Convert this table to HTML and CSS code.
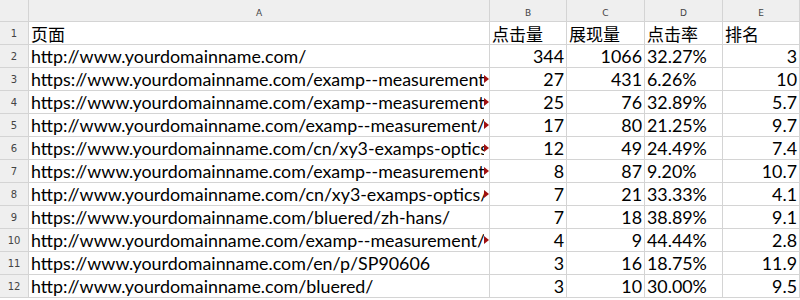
FILE: index.html
```html
<!DOCTYPE html>
<html>
<head>
<meta charset="utf-8">
<link rel="stylesheet" href="styles.css">
</head>
<body>
<div class="sheet">
  <div class="corner"></div>
  <div class="colhead">A</div>
  <div class="colhead">B</div>
  <div class="colhead">C</div>
  <div class="colhead">D</div>
  <div class="colhead">E</div>

  <div class="rowhead">1</div>
  <div class="cell cjk">页面</div>
  <div class="cell cjk">点击量</div>
  <div class="cell cjk">展现量</div>
  <div class="cell cjk">点击率</div>
  <div class="cell cjk">排名</div>

  <div class="rowhead">2</div>
  <div class="cell">http://www.yourdomainname.com/</div>
  <div class="cell num">344</div>
  <div class="cell num">1066</div>
  <div class="cell">32.27%</div>
  <div class="cell num">3</div>

  <div class="rowhead">3</div>
  <div class="cell clip"><span class="txt">https://www.yourdomainname.com/examp--measurement/</span><span class="mark"></span></div>
  <div class="cell num">27</div>
  <div class="cell num">431</div>
  <div class="cell">6.26%</div>
  <div class="cell num">10</div>

  <div class="rowhead">4</div>
  <div class="cell clip"><span class="txt">https://www.yourdomainname.com/examp--measurement/</span><span class="mark"></span></div>
  <div class="cell num">25</div>
  <div class="cell num">76</div>
  <div class="cell">32.89%</div>
  <div class="cell num">5.7</div>

  <div class="rowhead">5</div>
  <div class="cell clip"><span class="txt">http://www.yourdomainname.com/examp--measurement/xx</span><span class="mark"></span></div>
  <div class="cell num">17</div>
  <div class="cell num">80</div>
  <div class="cell">21.25%</div>
  <div class="cell num">9.7</div>

  <div class="rowhead">6</div>
  <div class="cell clip"><span class="txt">https://www.yourdomainname.com/cn/xy3-examps-optics/</span><span class="mark"></span></div>
  <div class="cell num">12</div>
  <div class="cell num">49</div>
  <div class="cell">24.49%</div>
  <div class="cell num">7.4</div>

  <div class="rowhead">7</div>
  <div class="cell clip"><span class="txt">https://www.yourdomainname.com/examp--measurement/</span><span class="mark"></span></div>
  <div class="cell num">8</div>
  <div class="cell num">87</div>
  <div class="cell">9.20%</div>
  <div class="cell num">10.7</div>

  <div class="rowhead">8</div>
  <div class="cell clip"><span class="txt">http://www.yourdomainname.com/cn/xy3-examps-optics/xx</span><span class="mark"></span></div>
  <div class="cell num">7</div>
  <div class="cell num">21</div>
  <div class="cell">33.33%</div>
  <div class="cell num">4.1</div>

  <div class="rowhead">9</div>
  <div class="cell">https://www.yourdomainname.com/bluered/zh-hans/</div>
  <div class="cell num">7</div>
  <div class="cell num">18</div>
  <div class="cell">38.89%</div>
  <div class="cell num">9.1</div>

  <div class="rowhead">10</div>
  <div class="cell clip"><span class="txt">http://www.yourdomainname.com/examp--measurement/xx</span><span class="mark"></span></div>
  <div class="cell num">4</div>
  <div class="cell num">9</div>
  <div class="cell">44.44%</div>
  <div class="cell num">2.8</div>

  <div class="rowhead">11</div>
  <div class="cell">https://www.yourdomainname.com/en/p/SP90606</div>
  <div class="cell num">3</div>
  <div class="cell num">16</div>
  <div class="cell">18.75%</div>
  <div class="cell num">11.9</div>

  <div class="rowhead">12</div>
  <div class="cell">http://www.yourdomainname.com/bluered/</div>
  <div class="cell num">3</div>
  <div class="cell num">10</div>
  <div class="cell">30.00%</div>
  <div class="cell num">9.5</div>
</div>
</body>
</html>
```

FILE: styles.css
```css
html, body {
  margin: 0;
  padding: 0;
  background: #ffffff;
}
.sheet {
  display: grid;
  grid-template-columns: 28px 460px 76px 77px 77px 76px;
  grid-template-rows: 21px repeat(12, 22px);
  gap: 1px;
  background: #d4d4d4;
  width: 800px;
  height: 298px;
  overflow: hidden;
  font-family: "Lato", "Noto Sans CJK SC", sans-serif;
  font-size: 17.85px;
  color: #000;
}
.corner, .colhead, .rowhead {
  background: #efefef;
  color: #444;
  font-family: "DejaVu Sans", sans-serif;
  font-size: 9px;
  display: flex;
  align-items: center;
  justify-content: center;
}
.colhead {
  padding-top: 4px;
  box-sizing: border-box;
}
.rowhead {
  font-size: 10px;
}
.cell {
  background: #ffffff;
  display: flex;
  align-items: center;
  padding: 0 1px 0 2px;
  white-space: nowrap;
  overflow: hidden;
  line-height: 22px;
}
.cjk {
  font-family: "Noto Sans CJK SC", sans-serif;
  font-size: 17px;
  padding-top: 1px;
}
.num {
  justify-content: flex-end;
  padding-right: 2px;
}
.clip {
  position: relative;
  padding-right: 5px;
}
.txt {
  overflow: hidden;
  flex: 1;
  min-width: 0;
}
.mark {
  position: absolute;
  right: 0;
  top: 7px;
  width: 0;
  height: 0;
  border-top: 4px solid transparent;
  border-bottom: 4px solid transparent;
  border-left: 5px solid #a01010;
}
```
